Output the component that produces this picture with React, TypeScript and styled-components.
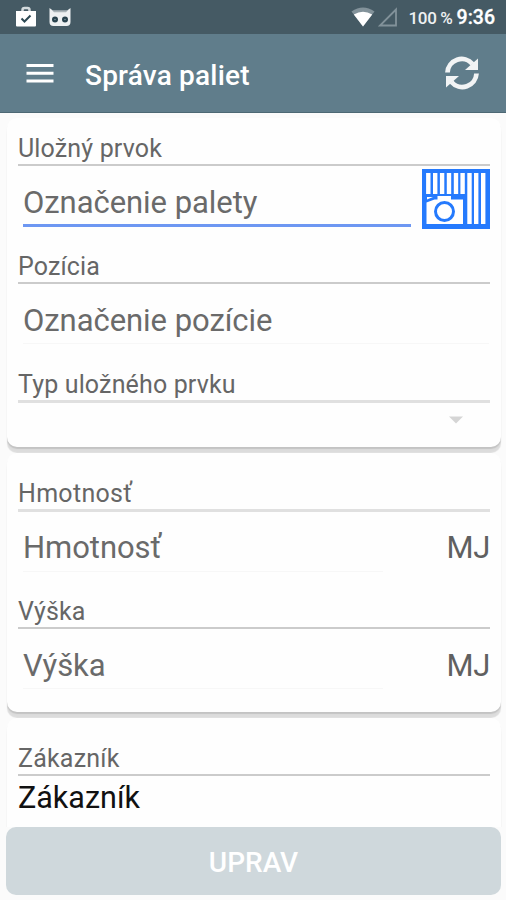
import React from "react";
import styled, { createGlobalStyle } from "styled-components";

const GlobalStyle = createGlobalStyle`
  * { box-sizing: border-box; }
  body { margin: 0; background: #fafafa; font-family: Roboto, "Noto Sans", sans-serif; }
`;

const Screen = styled.div`
  width: 506px;
  height: 900px;
  overflow: hidden;
  display: flex;
  flex-direction: column;
  background: #fbfbfb;
`;

const StatusBar = styled.div`
  flex: none;
  height: 34px;
  padding: 1px 11px 0 15px;
  display: flex;
  align-items: center;
  background: #455a64;
  color: #fff;
`;

const StatusIcons = styled.div`
  flex: 1;
  display: flex;
  align-items: center;
  gap: 12px;
  margin-top: -2px;
`;

const Signals = styled.div`
  display: flex;
  align-items: center;
  gap: 3px;
  margin: -2px 10px 0 0;
`;

const Battery = styled.span`
  font-size: 17px;
  font-weight: 500;
  letter-spacing: -0.2px;
  word-spacing: -0.5px;
  color: #eef1f2;
  margin-right: 4px;
`;

const Clock = styled.span`
  font-size: 19.5px;
  font-weight: 500;
  -webkit-text-stroke: 0.3px #fff;
`;

const Toolbar = styled.header`
  flex: none;
  height: 79px;
  padding: 0 26px;
  display: flex;
  align-items: center;
  background: #607d8b;
  border-bottom: 1px solid #4d6874;
  color: #fff;
`;

const Title = styled.h1`
  flex: 1;
  margin: 5px 0 0 31px;
  font-size: 28px;
  line-height: 36px;
  letter-spacing: 0.2px;
  font-weight: 500;
`;

const IconButton = styled.button`
  display: flex;
  padding: 0;
  border: 0;
  background: none;
  color: #fff;
`;

const Content = styled.main`
  flex: 1;
  min-height: 0;
  overflow: hidden;
  padding: 5px 5px 0 7px;
  display: flex;
  flex-direction: column;
  gap: 6px;
`;

const Card = styled.section<{ $height: number; $top: number }>`
  flex: none;
  height: ${(p) => p.$height}px;
  padding: ${(p) => p.$top}px 11px 0;
  border-radius: 10px;
  background: #fefefe;
  box-shadow: 0 2px 1px rgba(0, 0, 0, 0.11), 0 6px 1px rgba(0, 0, 0, 0.12);
`;

const Label = styled.div<{ $thick?: boolean; $spacing?: number }>`
  height: ${(p) => (p.$thick ? 34 : 33)}px;
  line-height: 31px;
  font-size: 25px;
  letter-spacing: ${(p) => p.$spacing ?? 0.15}px;
  color: #666;
  border-bottom: ${(p) => (p.$thick ? "3px solid #e0e0e0" : "2px solid #cbcbcb")};
`;

const InputRow = styled.div<{ $thick?: boolean }>`
  display: flex;
  justify-content: space-between;
  height: ${(p) => (p.$thick ? 84 : 85)}px;
  padding-left: 5px;
  line-height: ${(p) => (p.$thick ? 48 : 50)}px;
`;

const Input = styled.div<{ $width: number; $focused?: boolean }>`
  width: ${(p) => p.$width}px;
  height: ${(p) => (p.$focused ? 49 : 48)}px;
  margin-top: 12px;
  font-size: 31px;
  letter-spacing: -0.05px;
  color: #6a6a6a;
  white-space: nowrap;
  border-bottom: ${(p) => (p.$focused ? "3px solid #6d97f2" : "1px solid #f7f7f7")};
`;

const Unit = styled.div`
  margin-top: 12px;
  font-size: 31px;
  letter-spacing: -0.3px;
  color: #606060;
`;

const ScanButton = styled(IconButton)`
  margin-top: 3px;
  height: 60px;
`;

const Select = styled.div`
  display: flex;
  justify-content: flex-end;
  padding: 13px 26px 0 0;
`;

const Value = styled.div`
  line-height: 44px;
  font-size: 30.5px;
  color: #111;
`;

const Footer = styled.footer`
  flex: none;
  padding: 0 5px 5px 6px;
`;

const SubmitButton = styled.button`
  display: block;
  width: 100%;
  height: 68px;
  padding: 3px 0 0;
  border: 0;
  border-radius: 10px;
  background: #cfd8dc;
  color: #fff;
  font: 500 28px Roboto, sans-serif;
`;

const ClipboardIcon = () => (
  <svg width="22" height="22" viewBox="0 0 22 22">
    <path d="M1 5h20v14.500q0 1-1 1H2q-1 0-1-1z" fill="#fff" />
    <path d="M7.500 5V4q0-2 2-2h3q2 0 2 2v1" fill="none" stroke="#d4dadd" strokeWidth="2.500" />
    <path d="M6.500 12.500l3 3 6-6" fill="none" stroke="#2c4853" strokeWidth="2" />
  </svg>
);

const RobotIcon = () => (
  <svg width="22" height="20" viewBox="0 0 22 20">
    <path d="M.5 1l4 3h13l4-3v14q0 4-4 4h-13q-4 0-4-4z" fill="#edf0f1" />
    <path d="M3 3.200h16l-2 2H5z" fill="#aab4b8" />
    <circle cx="6" cy="12.500" r="3" fill="#29434e" />
    <circle cx="16" cy="12.500" r="3" fill="#29434e" />
    <circle cx="6" cy="12.500" r=".8" fill="#78909c" />
    <circle cx="16" cy="12.500" r=".8" fill="#78909c" />
  </svg>
);

const WifiIcon = () => (
  <svg width="24" height="20" viewBox="0 0 24 20">
    <path d="M.5 4.500Q12-3.500 23.500 4.500L12 19.500z" fill="#82929a" />
    <path d="M2.800 7.500Q12 2 21.200 7.500L12 19.500z" fill="#fff" />
  </svg>
);

const SignalIcon = () => (
  <svg width="20" height="20" viewBox="0 0 20 20">
    <path d="M18 2.500v16H2z" fill="none" stroke="#82929a" strokeWidth="1.800" />
  </svg>
);

const MenuIcon = () => (
  <svg width="28" height="20" viewBox="0 0 28 20">
    <path d="M.5 2.500h27M.5 10.300h27M.5 18h27" stroke="#fff" strokeWidth="3" />
  </svg>
);

const SyncIcon = () => (
  <svg width="36" height="36" viewBox="0 0 36 36" fill="none" stroke="#f2f4f5" strokeWidth="4.800">
    <path d="M3.500 17.500A14.200 14.200 0 0 1 28.500 9" />
    <path d="M32.500 18.500A14.200 14.200 0 0 1 7.500 27" />
    <path d="M34 3.500v11.500H21z" fill="#f2f4f5" stroke="none" />
    <path d="M2 32.500V21H15z" fill="#f2f4f5" stroke="none" />
  </svg>
);

const ScanIcon = () => (
  <svg width="68" height="60" viewBox="0 0 68 60">
    <path d="M0 0h68v60H0z" fill="#257afd" />
    <path
      d="M6.300 4v22M13.200 4v22M20.100 4v22M27 4v22M34 4v22M40.600 4v22M47.500 4v51M54.200 4v51M61.200 4v51"
      stroke="#fff"
      strokeWidth="4.400"
    />
    <path d="M3 25h40v5H3z" fill="#257afd" />
    <path d="M4.500 33.500l8-3h3V27H29v3.500h12V55H4.500z" fill="#fff" />
    <path d="M5 28h6l-6 2.500z" fill="#fff" />
    <circle cx="22.500" cy="42.500" r="9" fill="#fff" stroke="#257afd" strokeWidth="3" />
  </svg>
);

const CaretIcon = () => (
  <svg width="16" height="8" viewBox="0 0 16 8">
    <path d="M1 .5h14L8 7.500z" fill="#d5d5d5" />
  </svg>
);

export default function App() {
  return (
    <>
      <GlobalStyle />
      <Screen>
        <StatusBar>
          <StatusIcons>
            <ClipboardIcon />
            <RobotIcon />
          </StatusIcons>
          <Signals>
            <WifiIcon />
            <SignalIcon />
          </Signals>
          <Battery>100 %</Battery>
          <Clock>9:36</Clock>
        </StatusBar>
        <Toolbar>
          <IconButton aria-label="Menu">
            <MenuIcon />
          </IconButton>
          <Title>Správa paliet</Title>
          <IconButton aria-label="Obnoviť">
            <SyncIcon />
          </IconButton>
        </Toolbar>
        <Content>
          <Card $height={329} $top={15}>
            <Label>Uložný prvok</Label>
            <InputRow>
              <Input $width={388} $focused>Označenie palety</Input>
              <ScanButton aria-label="Skenovať">
                <ScanIcon />
              </ScanButton>
            </InputRow>
            <Label>Pozícia</Label>
            <InputRow>
              <Input $width={466}>Označenie pozície</Input>
            </InputRow>
            <Label $thick>Typ uložného prvku</Label>
            <Select>
              <CaretIcon />
            </Select>
          </Card>
          <Card $height={259} $top={25}>
            <Label $thick $spacing={0.3}>Hmotnosť</Label>
            <InputRow $thick>
              <Input $width={360}>Hmotnosť</Input>
              <Unit>MJ</Unit>
            </InputRow>
            <Label>Výška</Label>
            <InputRow>
              <Input $width={360}>Výška</Input>
              <Unit>MJ</Unit>
            </InputRow>
          </Card>
          <Card $height={140} $top={25}>
            <Label $spacing={0.2}>Zákazník</Label>
            <Value>Zákazník</Value>
          </Card>
        </Content>
        <Footer>
          <SubmitButton>UPRAV</SubmitButton>
        </Footer>
      </Screen>
    </>
  );
}
